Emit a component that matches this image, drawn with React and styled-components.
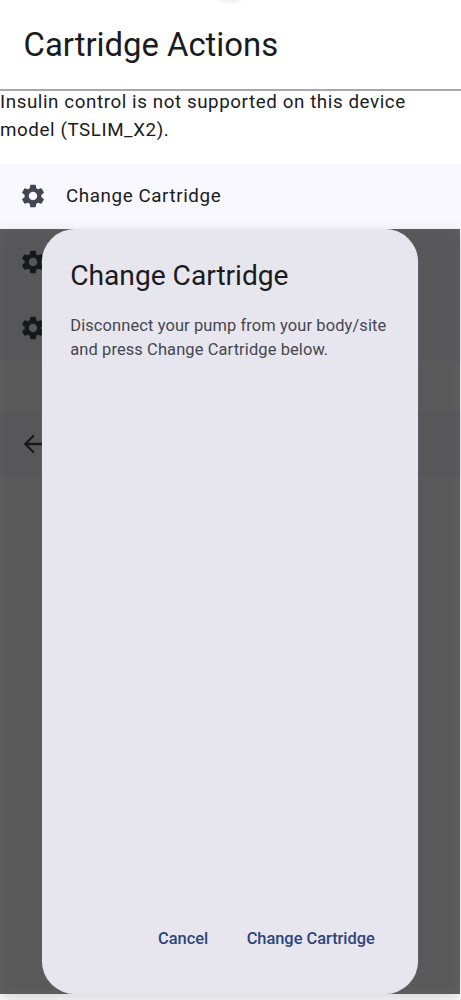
import React from "react";
import styled, { createGlobalStyle } from "styled-components";
import { MdSettings, MdArrowBack } from "react-icons/md";

const GlobalStyle = createGlobalStyle`
  * { box-sizing: border-box; }
  body { margin: 0; background: #fff; }
  h1, h2, p { margin: 0; font-weight: 400; }
`;

const Screen = styled.main`
  position: relative;
  width: 461px;
  height: 1000px;
  overflow: hidden;
  background: #fff;
  color: #1a1b20;
  font-family: Roboto, sans-serif;
  display: flex;
  flex-direction: column;
`;

const CameraShade = styled.div`
  position: absolute;
  top: -37px;
  left: 212px;
  width: 35px;
  height: 35px;
  border-radius: 50%;
  box-shadow: 0 0 9px rgba(0, 0, 0, 0.26);
`;

const Header = styled.header`
  flex: none;
  height: 91px;
  padding: 24px 24px 0 23.5px;
  border-bottom: 2px solid #a9a7af;
`;

const PageTitle = styled.h1`
  font-size: 32.9px;
  line-height: 42px;
  letter-spacing: -0.03px;
  white-space: nowrap;
`;

const Notice = styled.div`
  flex: none;
  height: 73px;
  font-size: 18.8px;
  line-height: 28.2px;
  letter-spacing: 0.575px;
  white-space: nowrap;
`;

const NoticeText = styled.p`
  margin-top: -3px;
`;

const ListRow = styled.div`
  flex: none;
  display: flex;
  align-items: center;
  gap: 19px;
  height: 65.8px;
  padding: 0 19px 1.4px;
  background: #f9f8ff;
  font-size: 18.8px;
  letter-spacing: 0.59px;

  svg {
    width: 28px;
    height: 28px;
    color: #44474f;
  }
`;

const Spacer = styled.div`
  flex: none;
  height: 50px;
`;

const Scrim = styled.div`
  position: absolute;
  top: 229px;
  left: 0;
  width: 460px;
  height: 765px;
  display: flex;
  justify-content: center;
  background: rgba(0, 0, 0, 0.65);
  box-shadow: 0 5px 14px rgba(0, 0, 0, 0.17),
    inset 0 0 14px rgba(255, 255, 255, 0.06);
`;

const Dialog = styled.section`
  width: 375.5px;
  height: 765px;
  padding: 28px;
  display: flex;
  flex-direction: column;
  border-radius: 33px;
  background: #e7e6ef;
  box-shadow: 0 0 1px rgba(255, 255, 255, 0.5);
`;

const DialogTitle = styled.h2`
  font-size: 28.2px;
  line-height: 38px;
  letter-spacing: -0.03px;
`;

const DialogText = styled.p`
  margin-top: 19px;
  color: #44474f;
  font-size: 16.45px;
  line-height: 23.5px;
  letter-spacing: 0.11px;
  white-space: nowrap;
`;

const Actions = styled.div`
  margin-top: auto;
  padding: 0 15px 15px 0;
  display: flex;
  justify-content: flex-end;
  gap: 38.5px;
`;

const TextButton = styled.button`
  padding: 0;
  border: 0;
  background: transparent;
  color: #2b457c;
  font: 500 16.45px/24px Roboto, sans-serif;
  letter-spacing: -0.04px;
  white-space: nowrap;
`;

export default function App() {
  return (
    <>
      <GlobalStyle />
      <Screen>
        <CameraShade />
        <Header>
          <PageTitle>Cartridge Actions</PageTitle>
        </Header>
        <Notice>
          <NoticeText>
            Insulin control is not supported on this device
            <br />
            model (TSLIM_X2).
          </NoticeText>
        </Notice>
        <ListRow>
          <MdSettings />
          Change Cartridge
        </ListRow>
        <ListRow>
          <MdSettings />
        </ListRow>
        <ListRow>
          <MdSettings />
        </ListRow>
        <Spacer />
        <ListRow>
          <MdArrowBack />
        </ListRow>
        <Scrim>
          <Dialog role="dialog">
            <DialogTitle>Change Cartridge</DialogTitle>
            <DialogText>
              Disconnect your pump from your body/site
              <br />
              and press Change Cartridge below.
            </DialogText>
            <Actions>
              <TextButton>Cancel</TextButton>
              <TextButton>Change Cartridge</TextButton>
            </Actions>
          </Dialog>
        </Scrim>
      </Screen>
    </>
  );
}
